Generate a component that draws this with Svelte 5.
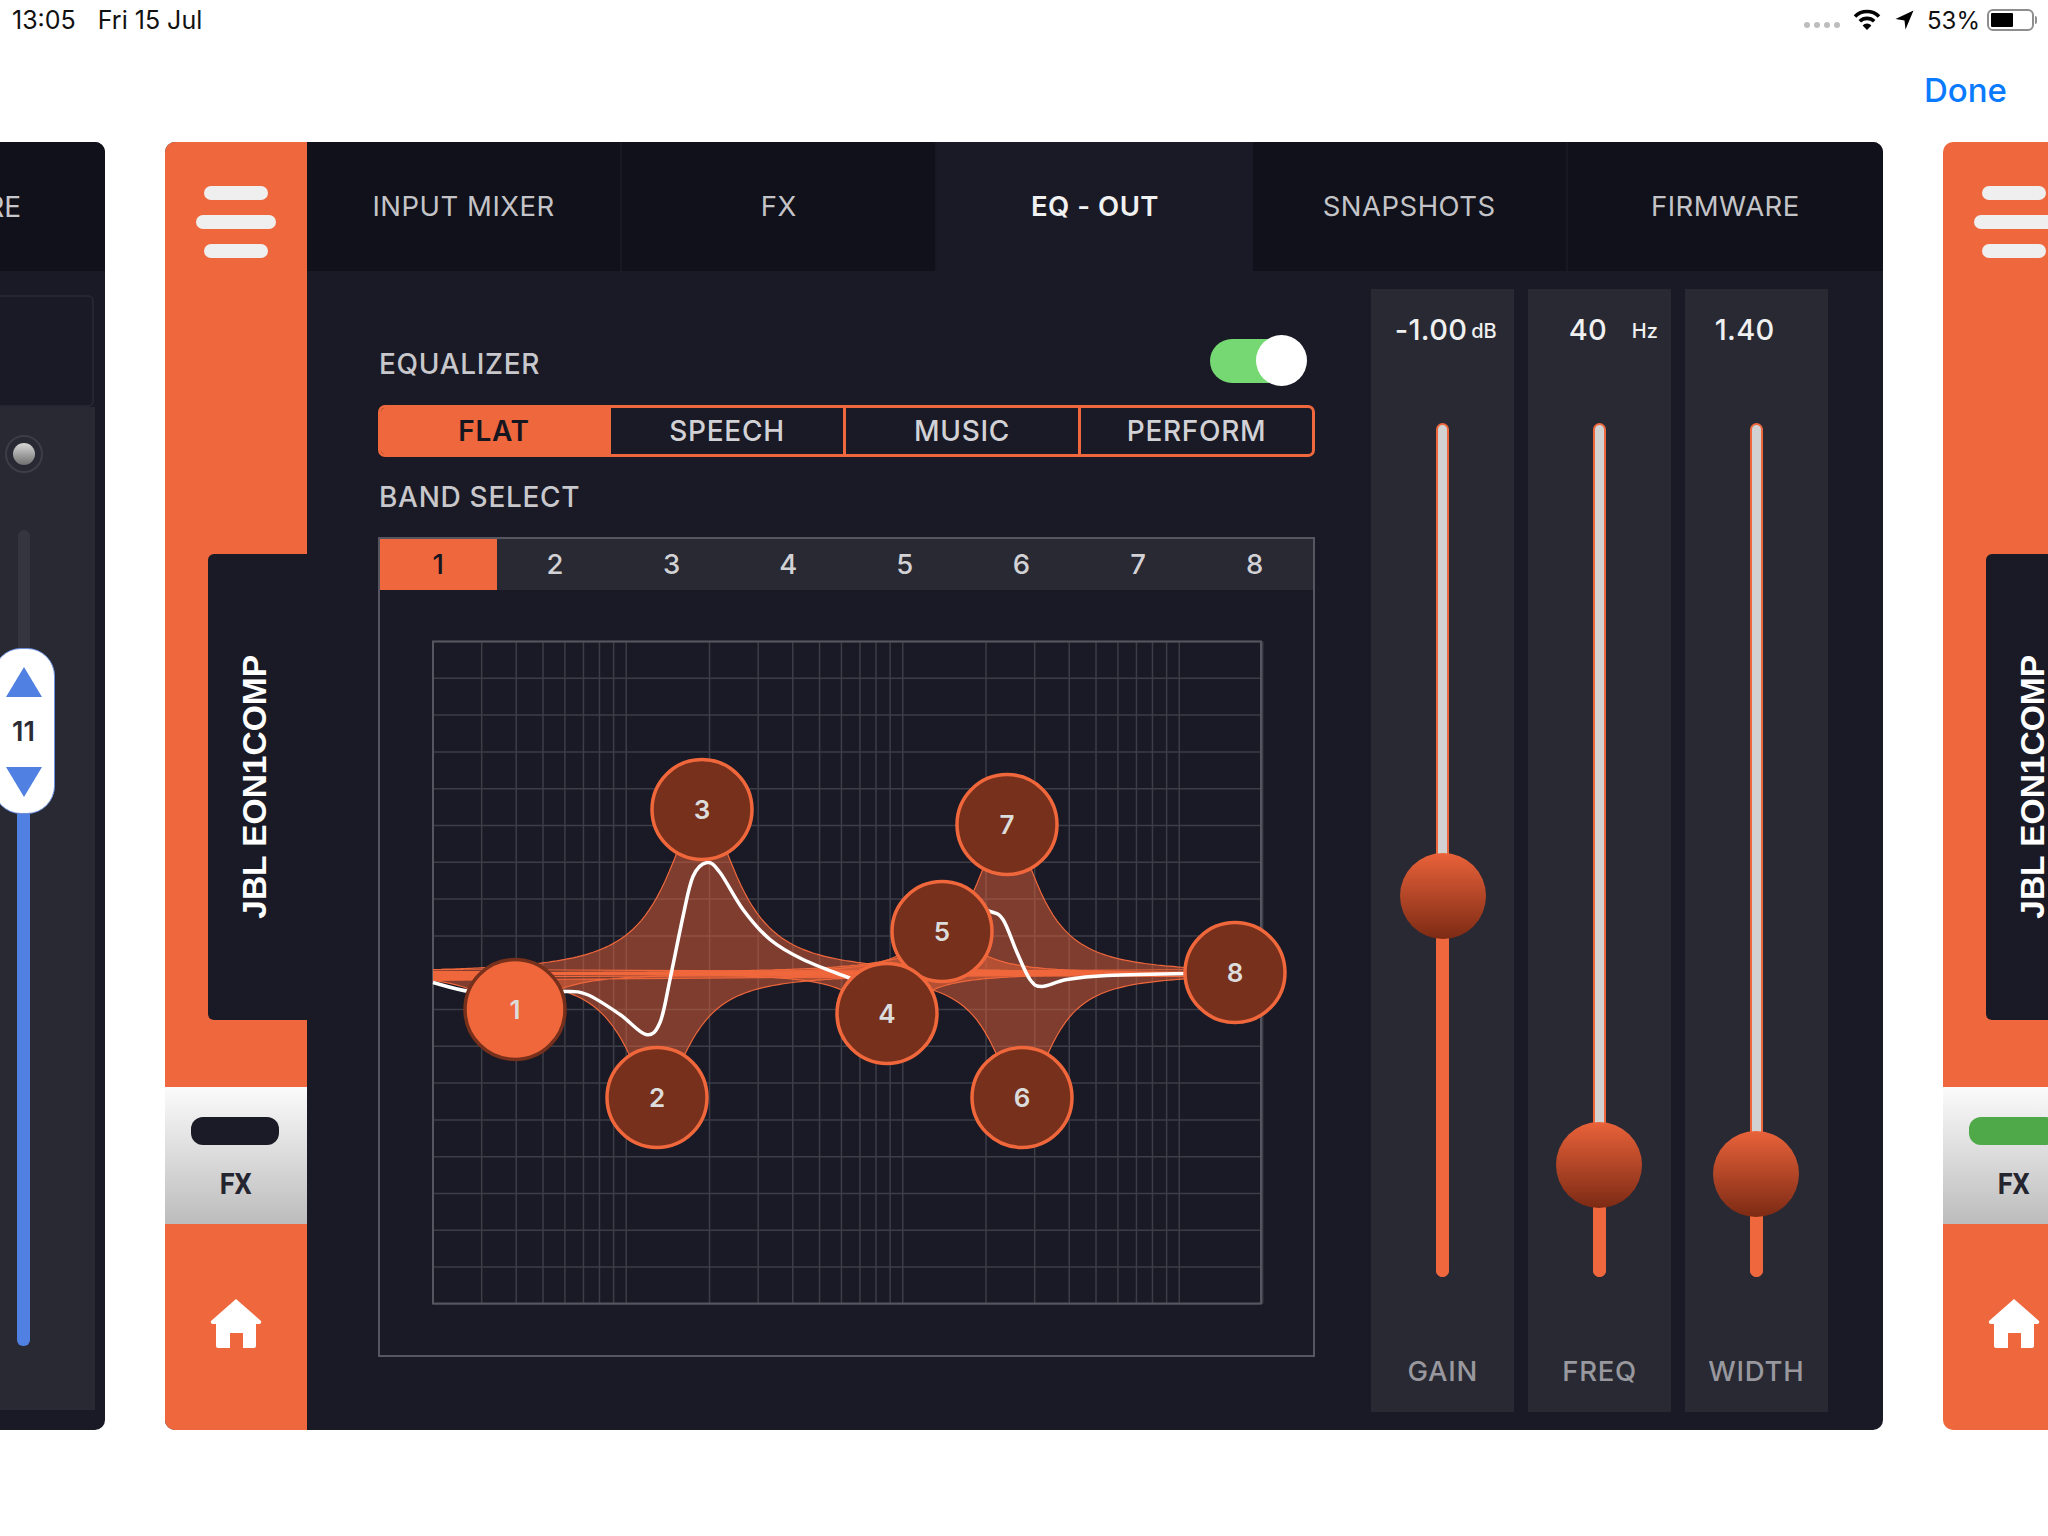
<script>
	const orange = '#f0673c';
	const tabs = ['INPUT MIXER', 'FX', 'EQ - OUT', 'SNAPSHOTS', 'FIRMWARE'];
	const presets = ['FLAT', 'SPEECH', 'MUSIC', 'PERFORM'];

	let activePreset = $state('FLAT');
	let activeBand = $state(1);

	const sliders = [
		{ label: 'GAIN', value: '-1.00', unit: 'dB', knob: 470.5 },
		{ label: 'FREQ', value: '40', unit: 'Hz', knob: 739.5 },
		{ label: 'WIDTH', value: '1.40', unit: '', knob: 748.5 }
	];

	// graph is drawn in page coordinates, see the viewBox
	const left = 433;
	const right = 1261;
	const top = 642;
	const bottom = 1304;
	const zero = 974;

	const rows = Array.from({ length: 19 }, (_, i) => top + i * 36.8);

	const freqs = [];
	for (const dec of [10, 100, 1000, 10000]) {
		for (let m = 1; m < 10; m++) {
			const f = dec * m;
			if (f >= 20 && f <= 20000) freqs.push(f);
		}
	}
	freqs.push(20000);
	const cols = freqs.map((f) => left + 276.5 * Math.log10(f / 20));

	const nodes = [
		{ id: 1, x: 515, y: 1010, w: 40 },
		{ id: 2, x: 657, y: 1098, w: 38 },
		{ id: 3, x: 702, y: 810, w: 42 },
		{ id: 5, x: 942, y: 932, w: 38 },
		{ id: 4, x: 887, y: 1014, w: 38 },
		{ id: 6, x: 1022, y: 1098, w: 35 },
		{ id: 7, x: 1007, y: 825, w: 37 },
		{ id: 8, x: 1235, y: 973, w: 38 }
	];

	function bell(n) {
		const pts = [];
		for (let x = left; x <= Math.min(right, 1240); x += 4) {
			const d = (x - n.x) / n.w;
			pts.push(`${x} ${(zero + (n.y - zero) / (1 + d * d)).toFixed(1)}`);
		}
		return 'M' + pts.join(' L') + ' Z';
	}

	const curvePts = [
		[433, 983], [470, 992], [515, 994], [563, 992], [587, 995], [620, 1015], [646, 1035], [660, 1023],
		[670, 980], [683, 917], [693, 877], [707, 863], [720, 873], [743, 910], [770, 940], [803, 960],
		[848, 978], [880, 990], [915, 960], [960, 905], [990, 912], [1003, 920], [1017, 953], [1030, 980],
		[1042, 987], [1067, 980], [1107, 976], [1190, 974], [1235, 974]
	];

	// catmull-rom through the points
	function smooth(p) {
		let d = `M${p[0][0]} ${p[0][1]}`;
		for (let i = 0; i < p.length - 1; i++) {
			const a = p[i - 1] ?? p[i];
			const b = p[i];
			const c = p[i + 1];
			const e = p[i + 2] ?? c;
			const c1 = [b[0] + (c[0] - a[0]) / 6, b[1] + (c[1] - a[1]) / 6];
			const c2 = [c[0] - (e[0] - b[0]) / 6, c[1] - (e[1] - b[1]) / 6];
			d += ` C${c1[0].toFixed(1)} ${c1[1].toFixed(1)} ${c2[0].toFixed(1)} ${c2[1].toFixed(1)} ${c[0]} ${c[1]}`;
		}
		return d;
	}
	const curve = smooth(curvePts);
</script>

{#snippet sidebar(pill)}
	<div class="burger">
		<span class="short"></span>
		<span></span>
		<span class="short"></span>
	</div>
	<div class="name"><span>JBL EON1COMP</span></div>
	<div class="fx">
		<span class="fx-pill" style="background: {pill}"></span>
		<span class="fx-text">FX</span>
	</div>
	<div class="home">
		<svg width="52" height="50" viewBox="0 0 52 50">
			<path
				fill="#fff"
				d="M26 0 L51 22 Q52 25 49 25 L46 25 L46 47 Q46 49 44 49 L33 49 L33 34 L20 34 L20 49 L8 49 Q6 49 6 47 L6 25 L3 25 Q0 25 1 22 Z"
			/>
		</svg>
	</div>
{/snippet}

<div class="page">
	<div class="status">
		<div class="time"><span>13:05</span><span>Fri 15 Jul</span></div>
		<div class="sys">
			<span class="dots"><i></i><i></i><i></i><i></i></span>
			<svg class="wifi" width="28" height="22" viewBox="0 0 28 22">
				<path d="M2 7.5 A17 17 0 0 1 26 7.5" />
				<path d="M6.8 12.2 A10.5 10.5 0 0 1 21.2 12.2" />
				<path d="M14 21 L9.6 16.4 A6 6 0 0 1 18.4 16.4 Z" class="wedge" />
			</svg>
			<svg class="arrow" width="19" height="20" viewBox="0 0 19 20">
				<path d="M18.5 0.5 L0.5 9 L9.5 10.5 L10.5 19.5 Z" />
			</svg>
			<span class="pct">53%</span>
			<span class="battery"><b></b></span>
			<span class="nub"></span>
		</div>
	</div>

	<div class="nav"><span class="done">Done</span></div>

	<div class="carousel">
		<!-- previous card, mostly off screen -->
		<div class="card stub-left">
			<div class="stub-tab"><span>FIRMWARE</span></div>
			<div class="stub-body">
				<div class="stub-box"></div>
				<div class="stub-panel">
					<div class="channel">
						<span class="led"><i></i></span>
						<span class="fader-top"></span>
						<div class="stepper">
							<span class="tri up"></span>
							<span class="step-num">11</span>
							<span class="tri down"></span>
						</div>
						<span class="fader-blue"></span>
					</div>
				</div>
			</div>
		</div>

		<div class="card main">
			<aside class="side">{@render sidebar('#1a1b26')}</aside>
			<div class="right">
				<nav class="tabs">
					{#each tabs as t}
						<div class="tab" class:active={t === 'EQ - OUT'}>{t}</div>
					{/each}
				</nav>
				<div class="content">
					<section class="eq">
						<div class="eq-head">
							<span class="title">EQUALIZER</span>
							<span class="toggle"><i></i></span>
						</div>
						<div class="presets">
							{#each presets as p}
								<button type="button" class:on={activePreset === p} onclick={() => (activePreset = p)}>{p}</button>
							{/each}
						</div>
						<div class="title band-title">BAND SELECT</div>
						<div class="bandbox">
							<div class="bands">
								{#each [1, 2, 3, 4, 5, 6, 7, 8] as b}
									<button type="button" class:on={activeBand === b} onclick={() => (activeBand = b)}>{b}</button>
								{/each}
							</div>
							<svg class="graph" viewBox="380 590.5 933 764" width="933" height="764">
								{#each rows as y}
									<line x1={left} x2={right} y1={y} y2={y} stroke="#3c3d47" stroke-width="1.5" />
								{/each}
								{#each cols as x}
									<line x1={x} x2={x} y1={top} y2={bottom} stroke="#3c3d47" stroke-width="1.5" />
								{/each}
								<rect x={left} y={top} width={right - left} height={bottom - top} fill="none" stroke="#55565f" stroke-width="2" />

								{#each nodes as n}
									{#if n.id !== 8}
										<path d={bell(n)} fill={orange} fill-opacity="0.47" stroke={orange} stroke-width="1.2" />
									{/if}
								{/each}
								<path d="M433 971 L530 972 L530 980 L433 981 Z" fill={orange} />
								<line x1={left} x2="1235" y1={zero} y2={zero} stroke={orange} stroke-width="4" />
								<path d={curve} fill="none" stroke="#fff" stroke-width="3.5" />

								{#each nodes as n}
									{@const on = n.id === activeBand}
									<circle cx={n.x} cy={n.y} r="50" fill={on ? orange : '#76301b'} stroke={on ? '#76301b' : orange} stroke-width="3.5" />
									<text x={n.x} y={n.y + 9} class="node-label">{n.id}</text>
								{/each}
							</svg>
						</div>
					</section>

					<section class="sliders">
						{#each sliders as s}
							<div class="panel">
								<div class="value">
									<span class="num">{s.value}</span>
									<span class="unit" class:hz={s.unit === 'Hz'}>{s.unit}</span>
								</div>
								<div class="track">
									<div class="track-fill" style="top: {s.knob}px"></div>
									<div class="knob" style="top: {s.knob}px"></div>
								</div>
								<div class="slider-label">{s.label}</div>
							</div>
						{/each}
					</section>
				</div>
			</div>
		</div>

		<!-- next card, cut by the window -->
		<div class="card stub-right">
			<aside class="side">{@render sidebar('#4fa949')}</aside>
		</div>
	</div>
</div>

<style>
	:global(body) {
		margin: 0;
		background: #fff;
	}

	.page {
		width: 2048px;
		height: 1536px;
		overflow: hidden;
		font-family: Inter, 'Noto Sans', sans-serif;
		background: #fff;
	}

	button {
		font: inherit;
		border: none;
		padding: 0;
		cursor: pointer;
	}

	/* status bar */
	.status {
		height: 40px;
		display: flex;
		justify-content: space-between;
		align-items: center;
		color: #111;
		font-size: 25px;
		padding: 0 11px 0 12px;
	}

	.time {
		display: flex;
		gap: 22px;
	}

	.sys {
		display: flex;
		align-items: center;
	}

	.dots {
		display: flex;
		gap: 4px;
		margin-top: 10px;
		margin-right: 13px;
	}

	.dots i {
		width: 6px;
		height: 6px;
		border-radius: 50%;
		background: #bdbdbd;
	}

	.wifi path {
		fill: none;
		stroke: #000;
		stroke-width: 3.6;
	}

	.wifi .wedge {
		fill: #000;
		stroke: none;
	}

	.arrow {
		margin-left: 14px;
		fill: #000;
	}

	.pct {
		margin-left: 13px;
		font-size: 24px;
	}

	.battery {
		margin-left: 7px;
		width: 47px;
		height: 22px;
		box-sizing: border-box;
		border: 2px solid #8e8e8e;
		border-radius: 6px;
		padding: 2px;
		display: flex;
	}

	.battery b {
		width: 22px;
		background: #000;
		border-radius: 1px;
	}

	.nub {
		width: 2px;
		height: 8px;
		margin-left: 1px;
		background: #8e8e8e;
		border-radius: 0 2px 2px 0;
	}

	.nav {
		height: 102px;
		display: flex;
		justify-content: flex-end;
		padding: 32px 41px 0 0;
		box-sizing: border-box;
	}

	.done {
		color: #0a7aff;
		font-size: 33px;
		font-weight: 500;
		line-height: 36px;
	}

	.carousel {
		display: flex;
		gap: 60px;
		height: 1288px;
	}

	.card {
		flex: none;
		height: 100%;
		display: flex;
		overflow: hidden;
		background: #191a25;
	}

	/* left stub */
	.stub-left {
		width: 105px;
		flex-direction: column;
		border-radius: 0 10px 10px 0;
	}

	.stub-tab {
		height: 129px;
		flex: none;
		background: #10111a;
		display: flex;
		align-items: center;
		justify-content: flex-end;
		padding-right: 84px;
		color: #c8c8cc;
		font-size: 28px;
		white-space: nowrap;
		overflow: hidden;
	}

	.stub-body {
		flex: 1;
		display: flex;
		flex-direction: column;
		padding: 24px 10px 20px 0;
	}

	.stub-box {
		height: 112px;
		width: 94px;
		flex: none;
		box-sizing: border-box;
		border: 2px solid #252631;
		border-left: none;
		border-radius: 0 6px 6px 0;
	}

	.stub-panel {
		flex: 1;
		background: #282933;
	}

	.channel {
		width: 47px;
		display: flex;
		flex-direction: column;
		align-items: center;
		padding-top: 28px;
	}

	.led {
		width: 38px;
		height: 38px;
		box-sizing: border-box;
		border: 2px solid #3c3d47;
		border-radius: 50%;
		display: flex;
		align-items: center;
		justify-content: center;
	}

	.led i {
		width: 22px;
		height: 22px;
		border-radius: 50%;
		background: linear-gradient(#d8d8d8, #6f6f6f);
	}

	.fader-top {
		width: 12px;
		height: 118px;
		margin-top: 57px;
		background: #34353f;
		border-radius: 6px 6px 0 0;
	}

	.stepper {
		flex: none;
		width: 62px;
		height: 166px;
		box-sizing: border-box;
		background: #fff;
		border: 1px solid #6c8fe0;
		border-radius: 28px;
		display: flex;
		flex-direction: column;
		align-items: center;
		padding-top: 18px;
		color: #2a2b35;
		font-size: 27px;
		font-weight: 600;
	}

	.tri {
		width: 0;
		height: 0;
		border-left: 18px solid transparent;
		border-right: 18px solid transparent;
	}

	.tri.up {
		border-bottom: 30px solid #4f80e2;
	}

	.tri.down {
		border-top: 30px solid #4f80e2;
	}

	.step-num {
		height: 70px;
		line-height: 70px;
	}

	.fader-blue {
		width: 13px;
		height: 532px;
		background: #4f80e2;
		border-radius: 0 0 6px 6px;
	}

	/* main card */
	.main {
		width: 1718px;
		border-radius: 10px;
	}

	.stub-right {
		flex: 1;
		border-radius: 10px 0 0 10px;
		min-width: 0;
	}

	.side {
		flex: none;
		width: 142px;
		background: #ee673d;
		display: flex;
		flex-direction: column;
	}

	.burger {
		padding-top: 44px;
		display: flex;
		flex-direction: column;
		align-items: center;
		gap: 15px;
		height: 73px;
		flex: none;
	}

	.burger span {
		width: 80px;
		height: 14px;
		border-radius: 7px;
		background: #efefef;
	}

	.burger .short {
		width: 64px;
	}

	.name {
		margin-top: 295px;
		align-self: flex-end;
		width: 99px;
		height: 466px;
		box-sizing: border-box;
		padding-right: 6px;
		background: #191a25;
		border-radius: 6px 0 0 6px;
		display: flex;
		align-items: center;
		justify-content: center;
	}

	.name span {
		writing-mode: vertical-rl;
		transform: rotate(180deg);
		color: #fff;
		font-family: 'Liberation Sans', sans-serif;
		font-weight: 700;
		font-size: 33.5px;
		white-space: nowrap;
	}

	.fx {
		margin-top: 67px;
		height: 137px;
		background: linear-gradient(#fbfbfb, #bcbcbc);
		display: flex;
		flex-direction: column;
		align-items: center;
		padding-top: 30px;
		box-sizing: border-box;
	}

	.fx-pill {
		width: 88px;
		height: 28px;
		border-radius: 12px;
		transform: translateX(-1px);
	}

	.fx-text {
		margin-top: 21px;
		color: #24252f;
		font-size: 30px;
		font-weight: 700;
		font-family: 'Roboto', sans-serif;
		transform: scaleX(0.9);
	}

	.home {
		flex: 1;
		display: flex;
		justify-content: center;
		padding-top: 75px;
		box-sizing: border-box;
	}

	.right {
		flex: 1;
		display: flex;
		flex-direction: column;
		min-width: 0;
	}

	.tabs {
		height: 129px;
		flex: none;
		display: grid;
		grid-template-columns: repeat(5, 1fr);
		background: #10111a;
	}

	.tab {
		display: flex;
		align-items: center;
		justify-content: center;
		padding-bottom: 2px;
		color: #c4c4c8;
		font-size: 27.5px;
		letter-spacing: 0.5px;
		border-right: 2px solid #171822;
	}

	.tab:last-child {
		border-right: none;
	}

	.tab.active {
		background: #191a25;
		color: #f1f1f1;
		font-weight: 600;
		border-right: none;
	}

	.content {
		flex: 1;
		display: flex;
		padding: 18px 55px 18px 71px;
		gap: 56px;
		min-height: 0;
	}

	.eq {
		width: 937px;
		flex: none;
		padding-top: 46px;
		display: flex;
		flex-direction: column;
	}

	.eq-head {
		height: 51px;
		display: flex;
		justify-content: space-between;
		align-items: center;
		padding: 0 16px 0 1px;
	}

	.title {
		color: #c8c8cc;
		font-size: 28px;
		font-weight: 500;
		letter-spacing: 0.7px;
	}

	.eq-head .title {
		padding-top: 7px;
	}

	.toggle {
		position: relative;
		width: 84px;
		height: 44px;
		margin-right: 5px;
		border-radius: 22px 0 0 22px;
		background: #76d872;
	}

	.toggle i {
		position: absolute;
		right: -13px;
		top: -4px;
		width: 51px;
		height: 51px;
		border-radius: 50%;
		background: #fff;
	}

	.presets {
		margin-top: 19px;
		height: 52px;
		box-sizing: border-box;
		border: 3px solid #ee673d;
		border-radius: 7px;
		display: grid;
		grid-template-columns: 230px 235px 235px 1fr;
		overflow: hidden;
	}

	.presets button {
		background: none;
		color: #d2d2d6;
		font-size: 28px;
		font-weight: 500;
		letter-spacing: 0.7px;
		border-right: 3px solid #ee673d;
	}

	.presets button:last-child {
		border-right: none;
	}

	.presets button.on {
		background: #ee673d;
		color: #15161f;
		font-weight: 600;
		border-right: none;
		padding-right: 4px;
	}

	.band-title {
		margin-top: 25px;
		height: 30px;
		line-height: 30px;
		padding-left: 1px;
	}

	.bandbox {
		margin-top: 25px;
		height: 820px;
		box-sizing: border-box;
		border: 2px solid #55565f;
		display: flex;
		flex-direction: column;
	}

	.bands {
		height: 51px;
		flex: none;
		display: grid;
		grid-template-columns: repeat(8, 1fr);
		background: #282933;
	}

	.bands button {
		background: none;
		color: #d2d2d6;
		font-size: 27.5px;
		font-weight: 500;
		padding-bottom: 2px;
	}

	.bands button.on {
		background: #ee673d;
		color: #15161f;
	}

	.graph {
		display: block;
		flex: none;
	}

	.node-label {
		fill: #dcdcdc;
		font-size: 26px;
		font-weight: 600;
		text-anchor: middle;
	}

	.sliders {
		display: flex;
		gap: 13.5px;
		flex: 1;
		min-width: 0;
	}

	.panel {
		flex: 1;
		background: #282933;
		display: flex;
		flex-direction: column;
		align-items: center;
		padding-top: 20px;
	}

	.value {
		height: 40px;
		width: 100%;
		display: flex;
		align-items: center;
		color: #f0f0f0;
	}

	.num {
		width: 99px;
		padding-left: 21px;
		box-sizing: border-box;
		text-align: center;
		font-size: 29px;
		font-weight: 500;
		letter-spacing: 0.3px;
		white-space: nowrap;
	}

	.unit {
		width: 28px;
		text-align: center;
		font-size: 20px;
		font-weight: 500;
		margin-top: 3px;
	}

	.unit.hz {
		margin-left: 4px;
	}

	.track {
		position: relative;
		margin-top: 74px;
		width: 13px;
		height: 854px;
		box-sizing: border-box;
		background: #d2d2d2;
		border: 2px solid #ee673d;
		border-radius: 7px;
		flex: none;
	}

	.track-fill {
		position: absolute;
		left: -2px;
		right: -2px;
		bottom: -2px;
		background: #ee673d;
		border-radius: 0 0 7px 7px;
	}

	.knob {
		position: absolute;
		left: 50%;
		width: 86px;
		height: 86px;
		margin: -43px 0 0 -43px;
		border-radius: 50%;
		background: linear-gradient(#e9623a, #7c2a14);
	}

	.slider-label {
		margin-top: 79px;
		height: 30px;
		line-height: 30px;
		color: #98989e;
		font-size: 27.5px;
		font-weight: 500;
		letter-spacing: 0.7px;
	}
</style>
